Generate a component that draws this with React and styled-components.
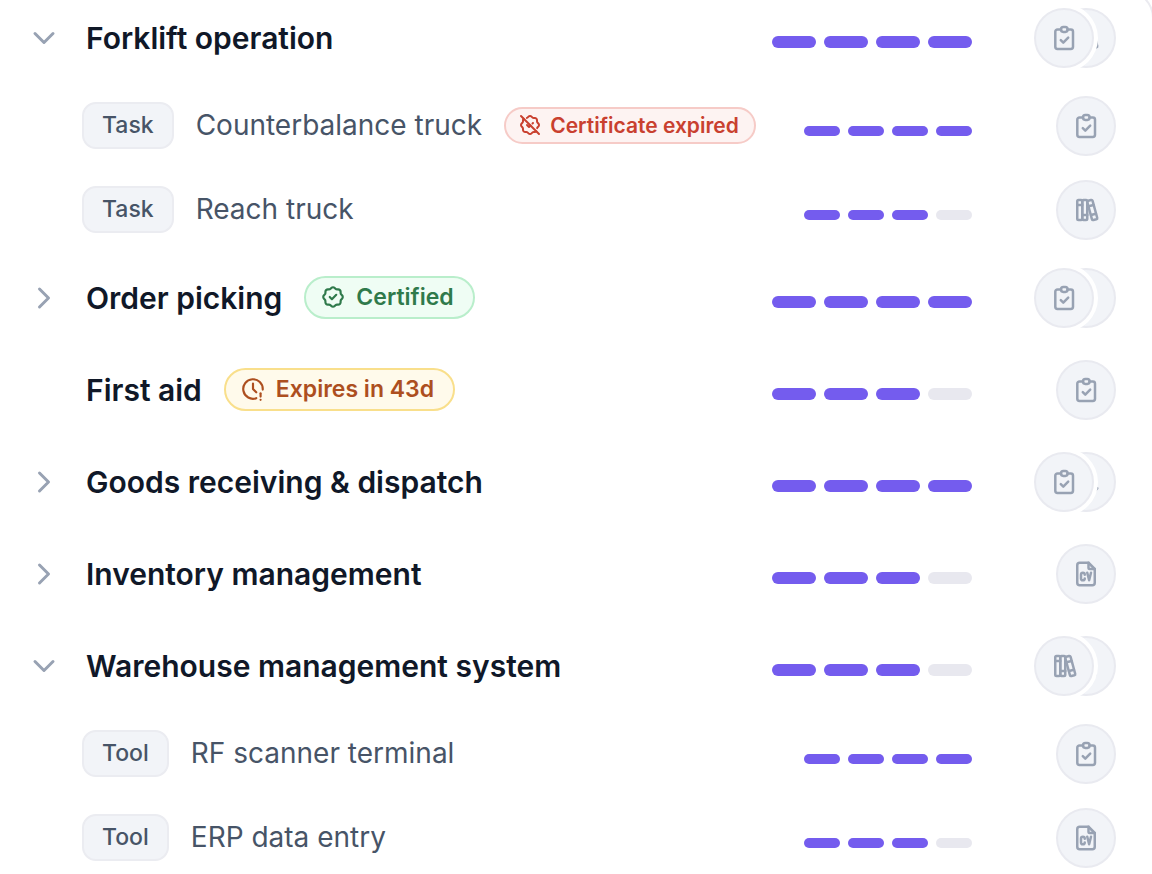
import React, {useState} from 'react'
import styled, {createGlobalStyle} from 'styled-components'
import {TbRosetteDiscountCheck, TbRosetteDiscountCheckOff, TbClockExclamation, TbUserCheck} from 'react-icons/tb'

const ClipboardIcon = () => (
  <Glyph viewBox="0 0 30 30" strokeWidth="2.5">
    <path d="M12 6.500H8.500a2.200 2.200 0 0 0-2.200 2.200v15.100a2.200 2.200 0 0 0 2.200 2.200h13.300a2.200 2.200 0 0 0 2.200-2.200V8.700a2.200 2.200 0 0 0-2.200-2.200H18.500" />
    <rect x="12" y="4.100" width="6.600" height="4.800" rx="2.300" />
    <path d="M11.800 17.200l2.500 2.500 4.900-5" />
  </Glyph>
)

const BooksIcon = () => (
  <Glyph viewBox="0 0 24 24" strokeWidth="2">
    <path d="M5 4m0 1a1 1 0 0 1 1-1h2a1 1 0 0 1 1 1v14a1 1 0 0 1-1 1h-2a1 1 0 0 1-1-1z" />
    <path d="M9 4m0 1a1 1 0 0 1 1-1h2a1 1 0 0 1 1 1v14a1 1 0 0 1-1 1h-2a1 1 0 0 1-1-1z" />
    <path d="M5 8h4M9 16h4" />
    <path d="M13.803 4.560l2.184-.530c.562-.135 1.133.190 1.282.732l3.695 13.418a1.020 1.020 0 0 1-.634 1.219l-.133.041-2.184.530c-.562.135-1.133-.190-1.282-.732l-3.695-13.418a1.020 1.020 0 0 1 .634-1.219z" />
    <path d="M14 9l4-1M16 16l3.923-.980" />
  </Glyph>
)

const CvIcon = () => (
  <Glyph viewBox="0 0 24 24" strokeWidth="2">
    <path d="M14 3v4a1 1 0 0 0 1 1h4" />
    <path d="M17 21h-10a2 2 0 0 1-2-2v-14a2 2 0 0 1 2-2h7l5 5v11a2 2 0 0 1-2 2z" />
    <path d="M11 12.500a1.500 1.500 0 0 0-3 0v3a1.500 1.500 0 0 0 3 0" />
    <path d="M13 11l1.500 6 1.500-6" />
  </Glyph>
)

const evidenceIcons = {
  clipboard: ClipboardIcon,
  books: BooksIcon,
  cv: CvIcon,
  person: TbUserCheck,
}

const badgeIcons = {
  certified: TbRosetteDiscountCheck,
  expiring: TbClockExclamation,
  expired: TbRosetteDiscountCheckOff,
}

const skills = [
  {
    name: 'Forklift operation', level: 4, evidence: ['clipboard', 'books'], open: true,
    children: [
      {kind: 'Task', name: 'Counterbalance truck', level: 4, evidence: ['clipboard'], badge: {type: 'expired', text: 'Certificate expired'}},
      {kind: 'Task', name: 'Reach truck', level: 3, evidence: ['books']},
    ],
  },
  {name: 'Order picking', level: 4, evidence: ['clipboard', 'cv'], badge: {type: 'certified', text: 'Certified'}, children: []},
  {name: 'First aid', level: 3, evidence: ['clipboard'], badge: {type: 'expiring', text: 'Expires in 43d'}},
  {name: 'Goods receiving & dispatch', level: 4, evidence: ['clipboard', 'person'], children: []},
  {name: 'Inventory management', level: 3, evidence: ['cv'], children: []},
  {
    name: 'Warehouse management system', level: 3, evidence: ['books', 'clipboard'], open: true,
    children: [
      {kind: 'Tool', name: 'RF scanner terminal', level: 4, evidence: ['clipboard']},
      {kind: 'Tool', name: 'ERP data entry', level: 3, evidence: ['cv']},
    ],
  },
]

const Status = ({badge, small}) => {
  const Icon = badgeIcons[badge.type]
  return (
    <Badge $type={badge.type} $small={small}>
      <Icon size={small ? 24 : 26} />
      {badge.text}
    </Badge>
  )
}

const Details = ({item, small}) => (
  <>
    <Level $small={small} role="img" aria-label={`Level ${item.level} of 4`}>
      {[1, 2, 3, 4].map(n => <Bar key={n} $on={n <= item.level} $small={small} />)}
    </Level>
    <Evidence>
      {item.evidence.map((name, i) => {
        const Icon = evidenceIcons[name]
        return <Circle key={name} $order={item.evidence.length - i}><Icon size={30} /></Circle>
      })}
    </Evidence>
  </>
)

const Skill = ({skill}) => {
  const [open, setOpen] = useState(!!skill.open)
  return (
    <li>
      <SkillRow>
        {skill.children ? (
          <Toggle aria-expanded={open} aria-label={`Toggle ${skill.name}`} onClick={() => setOpen(!open)}>
            <Chevron viewBox="0 0 32 32">
              <path d={open ? 'M7 11.500l9 9 9-9' : 'M11.500 7l9 9-9 9'} />
            </Chevron>
          </Toggle>
        ) : <span />}
        <Label>
          <SkillName>{skill.name}</SkillName>
          {skill.badge && <Status badge={skill.badge} />}
        </Label>
        <Details item={skill} />
      </SkillRow>
      {open && (
        <List>
          {skill.children.map(item => (
            <ItemRow key={item.name}>
              <ItemLabel>
                <Kind>{item.kind}</Kind>
                <ItemName>{item.name}</ItemName>
                {item.badge && <Status badge={item.badge} small />}
              </ItemLabel>
              <Details item={item} small />
            </ItemRow>
          ))}
        </List>
      )}
    </li>
  )
}

const App = () => (
  <Screen>
    <GlobalStyle />
    <Card>
      <List>
        {skills.map(skill => <Skill key={skill.name} skill={skill} />)}
      </List>
    </Card>
  </Screen>
)

export default App


const GlobalStyle = createGlobalStyle`
  * {
    box-sizing: border-box;
  }
  body {
    margin: 0;
    background: #fff;
    font-family: Inter, sans-serif;
  }
`

const Screen = styled.main`
  height: 100vh;
  overflow: hidden;
`

const Card = styled.section`
  margin: -10px -2px 0 0;
  border: 2px solid #ebebf0;
  border-left: 0;
  border-radius: 0 28px 0 0;
`

const List = styled.ul`
  margin: 0;
  padding: 0;
  list-style: none;
`

const SkillRow = styled.div`
  display: grid;
  grid-template-columns: 32px 1fr auto 144px;
  align-items: center;
  height: 92px;
  padding: 0 36px 0 28px;
`

const ItemRow = styled.li`
  display: grid;
  grid-template-columns: 1fr auto 144px;
  align-items: center;
  height: 84px;
  padding: 0 36px 0 82px;
`

const Toggle = styled.button`
  display: flex;
  padding: 0;
  border: 0;
  background: none;
  cursor: pointer;
`

const Chevron = styled.svg`
  width: 32px;
  height: 32px;
  fill: none;
  stroke: #98a2b3;
  stroke-width: 3;
  stroke-linecap: round;
  stroke-linejoin: round;
`

const Label = styled.div`
  display: flex;
  align-items: center;
  gap: 22px;
  min-width: 0;
  white-space: nowrap;
`

const ItemLabel = styled(Label)`
  padding-bottom: 2px;
`

const SkillName = styled.span`
  padding-left: 26px;
  color: #101828;
  font-size: 30px;
  font-weight: 600;
  line-height: 40px;
`

const ItemName = styled.span`
  color: #475467;
  font-size: 28px;
  line-height: 40px;
`

const Kind = styled.span`
  padding: 6px 18px 7px;
  border: 2px solid #ebecf1;
  border-radius: 14px;
  background: #f2f4f8;
  color: #475467;
  font-size: 23px;
  font-weight: 500;
  line-height: 30px;
`

const badgeColors = {
  certified: 'color: #2f7a4b; background: #effdf4; border-color: #b9eecb;',
  expiring: 'color: #ad4f1f; background: #fffaeb; border-color: #f9df8b;',
  expired: 'color: #c9402f; background: #fdf3f2; border-color: #f6cbc7;',
}

const Badge = styled.span`
  display: flex;
  align-items: center;
  gap: ${p => p.$small ? 8 : 10}px;
  height: ${p => p.$small ? 37 : 43}px;
  margin-bottom: ${p => p.$small ? 0 : 2}px;
  padding: ${p => p.$small ? '0 15px 0 12px' : '0 19px 0 14px'};
  border: 2px solid;
  border-radius: 22px;
  font-size: ${p => p.$small ? 21 : 23}px;
  font-weight: 600;
  ${p => badgeColors[p.$type]}
`

const Level = styled.div`
  display: flex;
  gap: 8px;
  padding-top: ${p => p.$small ? 10 : 8}px;
`

const Bar = styled.span`
  width: ${p => p.$small ? 36 : 44}px;
  height: ${p => p.$small ? 10 : 12}px;
  border-radius: 6px;
  background: ${p => p.$on ? '#745cee' : '#e8e8ef'};
`

const Evidence = styled.div`
  display: flex;
  justify-content: flex-end;
`

const Circle = styled.span`
  display: flex;
  align-items: center;
  justify-content: center;
  width: 60px;
  height: 60px;
  border: 2px solid #e9eaf0;
  border-radius: 50%;
  background: #f2f4f8;
  box-shadow: 0 0 0 4px #fff;
  color: #98a2b3;
  z-index: ${p => p.$order};
  & + & {
    margin-left: -38px;
  }
`

const Glyph = styled.svg`
  width: 30px;
  height: 30px;
  fill: none;
  stroke: currentColor;
  stroke-linecap: round;
  stroke-linejoin: round;
`
